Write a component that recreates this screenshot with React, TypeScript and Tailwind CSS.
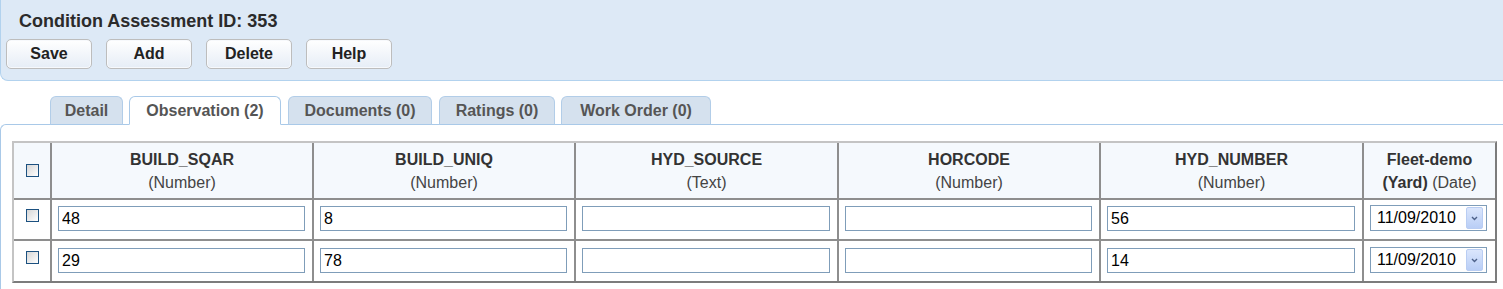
import React from 'react';

interface Column {
  name: string;
  type: string;
}

const columns: Column[] = [
  { name: 'BUILD_SQAR', type: '(Number)' },
  { name: 'BUILD_UNIQ', type: '(Number)' },
  { name: 'HYD_SOURCE', type: '(Text)' },
  { name: 'HORCODE', type: '(Number)' },
  { name: 'HYD_NUMBER', type: '(Number)' },
];

const rows = [
  { values: ['48', '8', '', '', '56'], date: '11/09/2010' },
  { values: ['29', '78', '', '', '14'], date: '11/09/2010' },
];

// widths and left gaps measured off the screenshot
const tabs = [
  { label: 'Detail', cls: 'w-[73px]' },
  { label: 'Observation (2)', cls: 'w-[152px] ml-[6px]', active: true },
  { label: 'Documents (0)', cls: 'w-[144px] ml-[7px]' },
  { label: 'Ratings (0)', cls: 'w-[116px] ml-[7px]' },
  { label: 'Work Order (0)', cls: 'w-[150px] ml-[6px]' },
];

const Checkbox = () => (
  <div className="w-[13px] h-[13px] border border-[#1c5180] bg-gradient-to-br from-[#d6d6d6] to-white" />
);

const DateSelect = ({ value }: { value: string }) => (
  <div className="w-[117px] h-[26px] border border-[#7f9db9] bg-white flex items-center justify-between pl-[6px] pr-[3px]">
    <span className="text-black leading-none">{value}</span>
    <div className="w-[17px] h-[22px] rounded-[2px] border border-[#b9cdf3] bg-gradient-to-b from-[#dbe6fc] to-[#b9cef6] flex items-center justify-center">
      <svg width="7" height="5" viewBox="0 0 7 5">
        <path d="M1 1 L3.5 3.5 L6 1" stroke="#4d6189" strokeWidth="1.4" fill="none" />
      </svg>
    </div>
  </div>
);

export default function App() {
  return (
    <div className="w-[1503px] h-[289px] bg-white overflow-hidden font-['Liberation_Sans',Arial,sans-serif] text-[16px] text-[#333]">
      {/* Record header */}
      <div className="h-[81px] bg-[#dde9f6] border-l border-b border-[#b2d2ee] rounded-bl-[8px]">
        <div className="pt-[10px] pl-[18px] text-[18px] leading-[22px] font-bold text-[#2b2b2b]">
          Condition Assessment ID: 353
        </div>
        <div className="mt-[7px] pl-[5px] flex gap-[14px]">
          {['Save', 'Add', 'Delete', 'Help'].map((b) => (
            <button
              key={b}
              type="button"
              className="w-[86px] h-[30px] rounded-[5px] border border-[#bdbdbd] bg-gradient-to-b from-white to-[#e6edf6] font-bold text-[16px] text-[#222] shadow-[inset_0_0_0_1px_#f7f9fc]"
            >
              {b}
            </button>
          ))}
        </div>
      </div>

      {/* Tabs */}
      <div className="mt-[15px] pl-[50px] flex relative z-10 -mb-px">
        {tabs.map((t) => (
          <div
            key={t.label}
            className={`${t.cls} h-[29px] rounded-t-[6px] border flex items-center justify-center font-bold text-[16px] text-[#555] ${
              t.active
                ? 'bg-white border-[#a9c9e8] border-b-white'
                : 'bg-[#d5e1ee] border-[#b2cde8] border-b-[#a9c9e8]'
            }`}
          >
            {t.label}
          </div>
        ))}
      </div>

      {/* Content */}
      <div className="border-t border-l border-[#a9c9e8] rounded-tl-[6px] h-[200px] pt-[16px] pl-[11px]">
        <div className="w-[1485px] grid grid-cols-[36px_260px_260px_261px_260px_261px_131px] grid-rows-[55px_39px_40px] gap-[2px] bg-[#8e8e8e] border-2 border-t-[#c4c4c4] border-l-[#c4c4c4] border-r-[#7c7c7c] border-b-[#7c7c7c]">
          {/* header row */}
          <div className="bg-[#f5f9fd] flex items-center justify-center">
            <Checkbox />
          </div>
          {columns.map((c) => (
            <div key={c.name} className="bg-[#f5f9fd] flex flex-col items-center justify-center leading-[23px]">
              <span className="font-bold text-[#333]">{c.name}</span>
              <span className="text-[#444]">{c.type}</span>
            </div>
          ))}
          <div className="bg-[#f5f9fd] flex flex-col items-center justify-center leading-[23px]">
            <span className="font-bold text-[#333]">Fleet-demo</span>
            <span className="text-[#444]">
              <span className="font-bold text-[#333]">(Yard)</span> (Date)
            </span>
          </div>

          {/* data rows */}
          {rows.map((r, i) => (
            <React.Fragment key={i}>
              <div className={`bg-white flex justify-center ${i === 0 ? 'pt-[9px]' : 'pt-[10px]'}`}>
                <Checkbox />
              </div>
              {r.values.map((v, j) => (
                <div key={j} className={`bg-white pl-[6px] pr-[7px] ${i === 0 ? 'pt-[6px]' : 'pt-[7px]'}`}>
                  <input
                    type="text"
                    defaultValue={v}
                    className="w-full h-[25px] border border-[#7f9db9] bg-white px-[3px] text-[16px] text-black outline-none font-['Liberation_Sans',Arial,sans-serif]"
                  />
                </div>
              ))}
              <div className={`bg-white pl-[6px] ${i === 0 ? 'pt-[5px]' : 'pt-[6px]'}`}>
                <DateSelect value={r.date} />
              </div>
            </React.Fragment>
          ))}
        </div>
      </div>
    </div>
  );
}
